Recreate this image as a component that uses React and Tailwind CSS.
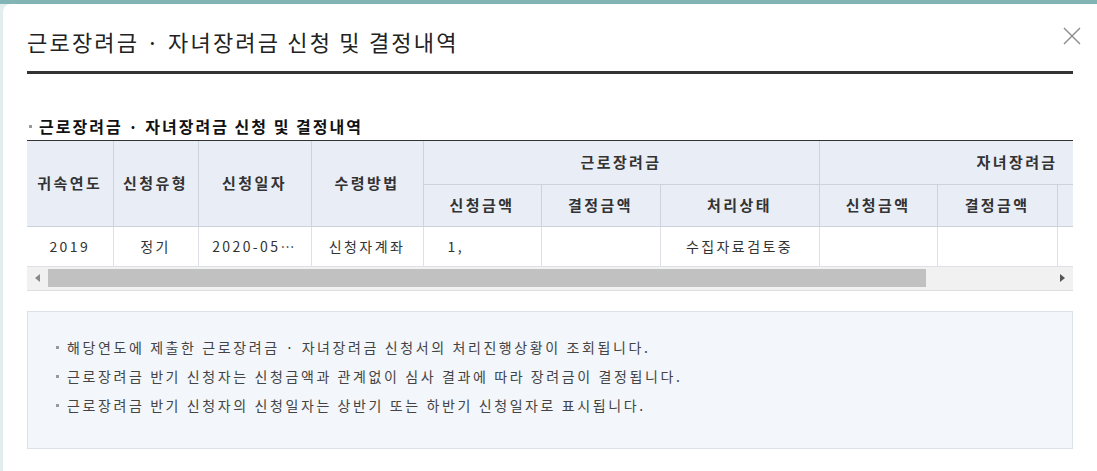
import React from "react";

const F = { fontFamily: '"Noto Sans CJK KR", "Noto Sans", sans-serif' };

function Th({ children, className = "", ...rest }) {
  return (
    <th
      {...rest}
      className={
        "bg-[#e9edf5] border-r border-b border-[#cdd3dd] text-[15px] font-bold text-[#333] tracking-[2.4px] text-center align-middle p-0 " +
        className
      }
    >
      {children}
    </th>
  );
}

function Td({ children, className = "" }) {
  return (
    <td
      className={
        "border-r border-b border-[#dde1e7] text-[14px] text-[#333] tracking-[2.4px] text-center align-middle p-0 whitespace-nowrap overflow-hidden " +
        className
      }
    >
      {children}
    </td>
  );
}

export default function App() {
  const cols = [86, 85, 113, 112, 118, 119, 159, 118, 120, 158];
  return (
    <div style={F} className="w-[1097px] h-[471px] bg-[#e2eded] border-t-[4px] border-[#82b3b5] overflow-hidden">
      <div className="relative ml-[3px] h-full bg-white rounded-tl-[8px] pl-[24px] pr-[24px]">
        <button className="absolute top-[23px] right-[16px] w-[18px] h-[18px]">
          <svg width="18" height="18" viewBox="0 0 18 18">
            <path d="M1 1 L17 17 M17 1 L1 17" stroke="#8a8a8a" strokeWidth="1.4" fill="none" />
          </svg>
        </button>
        <div className="pt-[21px] h-[67px]">
          <h1 className="text-[22px] leading-[32px] text-[#222] tracking-[2.2px] font-normal">
            근로장려금 · 자녀장려금 신청 및 결정내역
          </h1>
        </div>
        <div className="h-[3px] bg-[#333]" />

        <div className="mt-[42px] flex items-center h-[20px]">
          <span className="w-[3px] h-[3px] bg-[#999] mr-[7px] ml-[2px]" />
          <h2 className="text-[16px] font-bold text-[#111] tracking-[2px] leading-[20px]">
            근로장려금 · 자녀장려금 신청 및 결정내역
          </h2>
        </div>

        <div className="mt-[4px] border-t border-[#333] overflow-hidden">
          <table className="border-collapse table-fixed" style={{ width: cols.reduce((a, b) => a + b, 0) }}>
            <colgroup>
              {cols.map((w, i) => (
                <col key={i} style={{ width: w }} />
              ))}
            </colgroup>
            <thead>
              <tr className="h-[43px]">
                <Th rowSpan={2}>귀속연도</Th>
                <Th rowSpan={2}>신청유형</Th>
                <Th rowSpan={2}>신청일자</Th>
                <Th rowSpan={2}>수령방법</Th>
                <Th colSpan={3}>근로장려금</Th>
                <Th colSpan={3}>자녀장려금</Th>
              </tr>
              <tr className="h-[42px]">
                <Th>신청금액</Th>
                <Th>결정금액</Th>
                <Th>처리상태</Th>
                <Th>신청금액</Th>
                <Th>결정금액</Th>
                <Th>처리상태</Th>
              </tr>
            </thead>
            <tbody>
              <tr className="h-[40px]">
                <Td>2019</Td>
                <Td>정기</Td>
                <Td className="tracking-[1px]">2020-05…</Td>
                <Td>신청자계좌</Td>
                <Td className="text-left pl-[24px]">1,</Td>
                <Td></Td>
                <Td className="tracking-[1.5px]">수집자료검토중</Td>
                <Td></Td>
                <Td></Td>
                <Td></Td>
              </tr>
            </tbody>
          </table>
          <div className="flex items-center h-[24px] bg-[#f1f1f1] border-b border-[#dedede] pt-[2px] pb-[3px]">
            <div className="w-[21px] h-full flex items-center justify-center">
              <svg width="5" height="8" viewBox="0 0 5 8"><path d="M5 0 L0 4 L5 8 Z" fill="#8a8a8a" /></svg>
            </div>
            <div className="w-[878px] h-full bg-[#c1c1c1]" />
            <div className="flex-1" />
            <div className="w-[21px] h-full flex items-center justify-center">
              <svg width="5" height="8" viewBox="0 0 5 8"><path d="M0 0 L5 4 L0 8 Z" fill="#555" /></svg>
            </div>
          </div>
        </div>

        <div className="mt-[20px] h-[138px] bg-[#f3f6fa] border border-[#dde2e8] pl-[28px] pt-[21px]">
          {[
            "해당연도에 제출한 근로장려금 · 자녀장려금 신청서의 처리진행상황이 조회됩니다.",
            "근로장려금 반기 신청자는 신청금액과 관계없이 심사 결과에 따라 장려금이 결정됩니다.",
            "근로장려금 반기 신청자의 신청일자는 상반기 또는 하반기 신청일자로 표시됩니다.",
          ].map((t, i) => (
            <div key={i} className="flex items-center h-[29px]">
              <span className="w-[3px] h-[3px] bg-[#999] mr-[8px]" />
              <span className="text-[14px] text-[#444] tracking-[2.6px]">{t}</span>
            </div>
          ))}
        </div>
      </div>
    </div>
  );
}
